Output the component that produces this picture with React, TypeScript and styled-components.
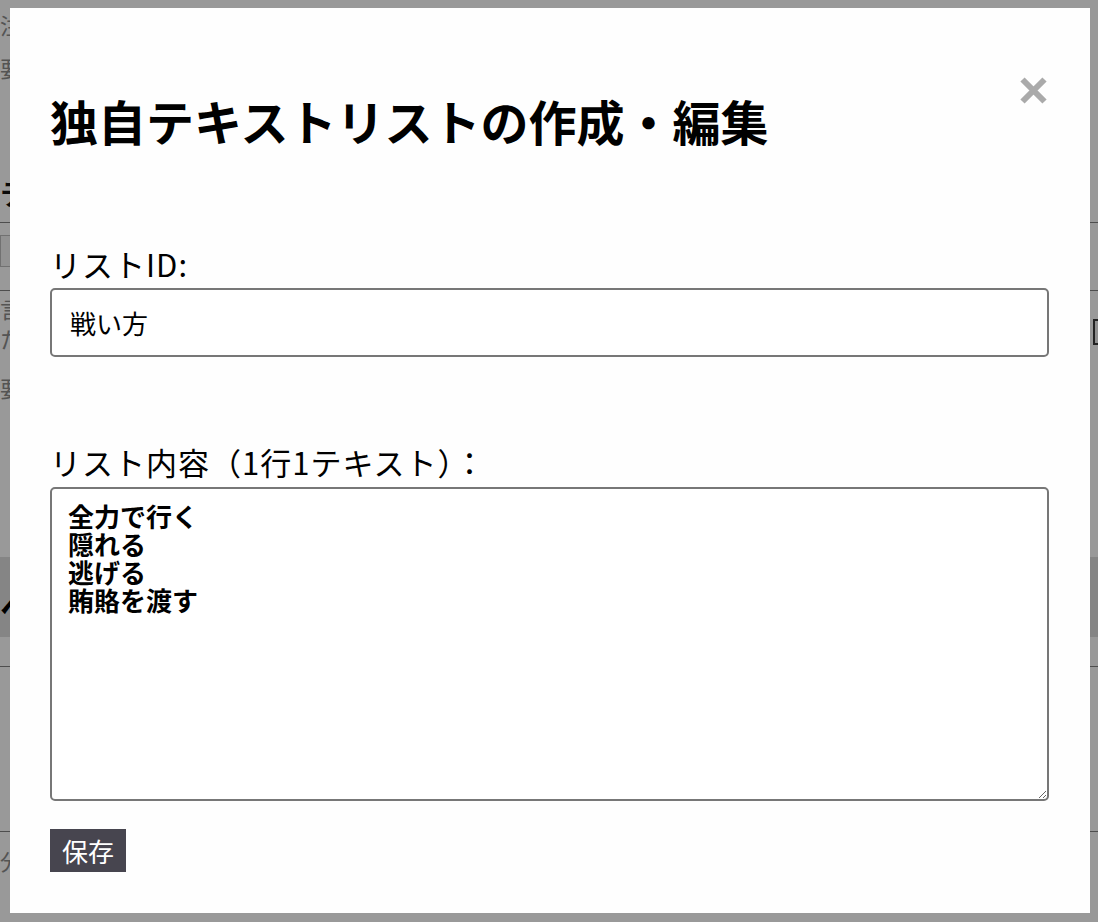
import React from "react";
import styled, { createGlobalStyle } from "styled-components";

const GlobalStyle = createGlobalStyle`
  html, body { margin: 0; padding: 0; background: #fff; }
  body {
    font-family: "Noto Sans CJK JP", "Noto Sans", sans-serif;
    color: #000;
    overflow: hidden;
  }
  * { box-sizing: border-box; }
`;

/* ---------- background page (dimmed behind the dialog) ---------- */

const Page = styled.div`
  width: 1098px;
  height: 922px;
  overflow: hidden;
  display: flex;
  flex-direction: column;
`;

const BgText = styled.div<{ $mt: number }>`
  margin-top: ${(p) => p.$mt}px;
  font-size: 22px;
  line-height: 30px;
  color: #8c8c8c;
  white-space: nowrap;
`;

const BgHeading = styled.div<{ $mt: number }>`
  margin-top: ${(p) => p.$mt}px;
  font-size: 28px;
  line-height: 34px;
  font-weight: 700;
  color: #111;
  white-space: nowrap;
`;

const BgRule = styled.hr<{ $mt: number }>`
  margin: ${(p) => p.$mt}px 0 0;
  border: none;
  border-top: 1px solid #828282;
  height: 0;
`;

const BgRow = styled.div<{ $mt: number; $h: number }>`
  margin-top: ${(p) => p.$mt}px;
  height: ${(p) => p.$h}px;
  display: flex;
  justify-content: space-between;
  align-items: flex-start;
`;

const BgField = styled.div`
  width: 200px;
  height: 32px;
  border: 1px solid #bdbdbd;
  background: #f4f4f4;
`;

const BgColumn = styled.div`
  display: flex;
  flex-direction: column;
`;

const BgButton = styled.div`
  margin-top: 26px;
  width: 60px;
  height: 26px;
  border: 2px solid #3a3a3a;
  background: #eee;
  margin-right: -55px;
`;

const BgBand = styled.div<{ $mt: number }>`
  margin-top: ${(p) => p.$mt}px;
  height: 80px;
  background: #dedede;
  display: flex;
  align-items: center;
  padding-top: 18px;
  font-size: 30px;
  font-weight: 700;
  color: #000;
  white-space: nowrap;
`;

/* ---------- dialog ---------- */

const Overlay = styled.div`
  position: fixed;
  inset: 0;
  background: rgba(0, 0, 0, 0.4);
  display: flex;
  padding: 8px 8px 9px 10px;
`;

const Modal = styled.div`
  position: relative;
  flex: 1;
  background: #fefefe;
  padding: 0 41px 0 40px;
  display: flex;
  flex-direction: column;
`;

const CloseButton = styled.button`
  position: absolute;
  top: 69px;
  right: 43px;
  width: 27px;
  height: 27px;
  padding: 0;
  border: none;
  background: transparent;
  cursor: pointer;
  display: flex;
  align-items: center;
  justify-content: center;
`;

const Title = styled.h2`
  margin: 83px 0 0;
  font-size: 48px;
  line-height: 58px;
  font-weight: 700;
  color: #000;
  white-space: nowrap;
`;

const Label = styled.label<{ $mt: number }>`
  display: block;
  margin-top: ${(p) => p.$mt}px;
  font-size: 31px;
  line-height: 36px;
  letter-spacing: 1px;
  color: #000;
  white-space: nowrap;
`;

const TextInput = styled.input`
  margin-top: 6px;
  width: 100%;
  height: 69px;
  padding: 0 18px;
  border: 2px solid #777;
  border-radius: 5px;
  background: #fff;
  font-family: "Noto Sans CJK JP", "Noto Sans", sans-serif;
  font-size: 26px;
  color: #000;
  outline: none;
`;

const TextArea = styled.textarea`
  margin-top: 7px;
  width: 100%;
  height: 314px;
  padding: 13px 16px;
  border: 2px solid #777;
  border-radius: 5px;
  background: #fff;
  font-family: "Noto Sans CJK JP", "Noto Sans", sans-serif;
  font-size: 26px;
  line-height: 28px;
  font-weight: 700;
  color: #000;
  resize: both;
  outline: none;
`;

const SaveButton = styled.button`
  margin-top: 28px;
  align-self: flex-start;
  height: 43px;
  padding: 0 12px;
  border: none;
  border-radius: 0;
  background: #47454f;
  color: #fff;
  font-family: "Noto Sans CJK JP", "Noto Sans", sans-serif;
  font-size: 26px;
  line-height: 43px;
  cursor: pointer;
`;

export default function App() {
  return (
    <>
      <GlobalStyle />
      <Page>
        <BgText $mt={9}>注意</BgText>
        <BgText $mt={13}>要約</BgText>
        <BgHeading $mt={94}>テキ</BgHeading>
        <BgRule $mt={12} />
        <BgRow $mt={12} $h={55}>
          <BgField />
        </BgRow>
        <BgRule $mt={0} />
        <BgRow $mt={2} $h={110}>
          <BgColumn>
            <BgText $mt={0}>言語</BgText>
            <BgText $mt={0}>ただ</BgText>
            <BgText $mt={19}>要点</BgText>
          </BgColumn>
          <BgButton />
        </BgRow>
        <BgBand $mt={154}>ヘル</BgBand>
        <BgRule $mt={29} />
        <BgRule $mt={164} />
        <BgText $mt={13}>分類</BgText>
      </Page>
      <Overlay>
        <Modal>
          <CloseButton aria-label="閉じる">
            <svg width="27" height="27" viewBox="0 0 27 27">
              <path
                d="M2.5 2.5 L24.5 24.5 M24.5 2.5 L2.5 24.5"
                stroke="#aaa"
                strokeWidth="6"
                fill="none"
              />
            </svg>
          </CloseButton>
          <Title>独自テキストリストの作成・編集</Title>
          <Label $mt={97} htmlFor="list-id">
            リストID:
          </Label>
          <TextInput id="list-id" defaultValue="戦い方" />
          <Label $mt={87} htmlFor="list-body">
            リスト内容（1行1テキスト）：
          </Label>
          <TextArea
            id="list-body"
            defaultValue={"全力で行く\n隠れる\n逃げる\n賄賂を渡す"}
          />
          <SaveButton>保存</SaveButton>
        </Modal>
      </Overlay>
    </>
  );
}
